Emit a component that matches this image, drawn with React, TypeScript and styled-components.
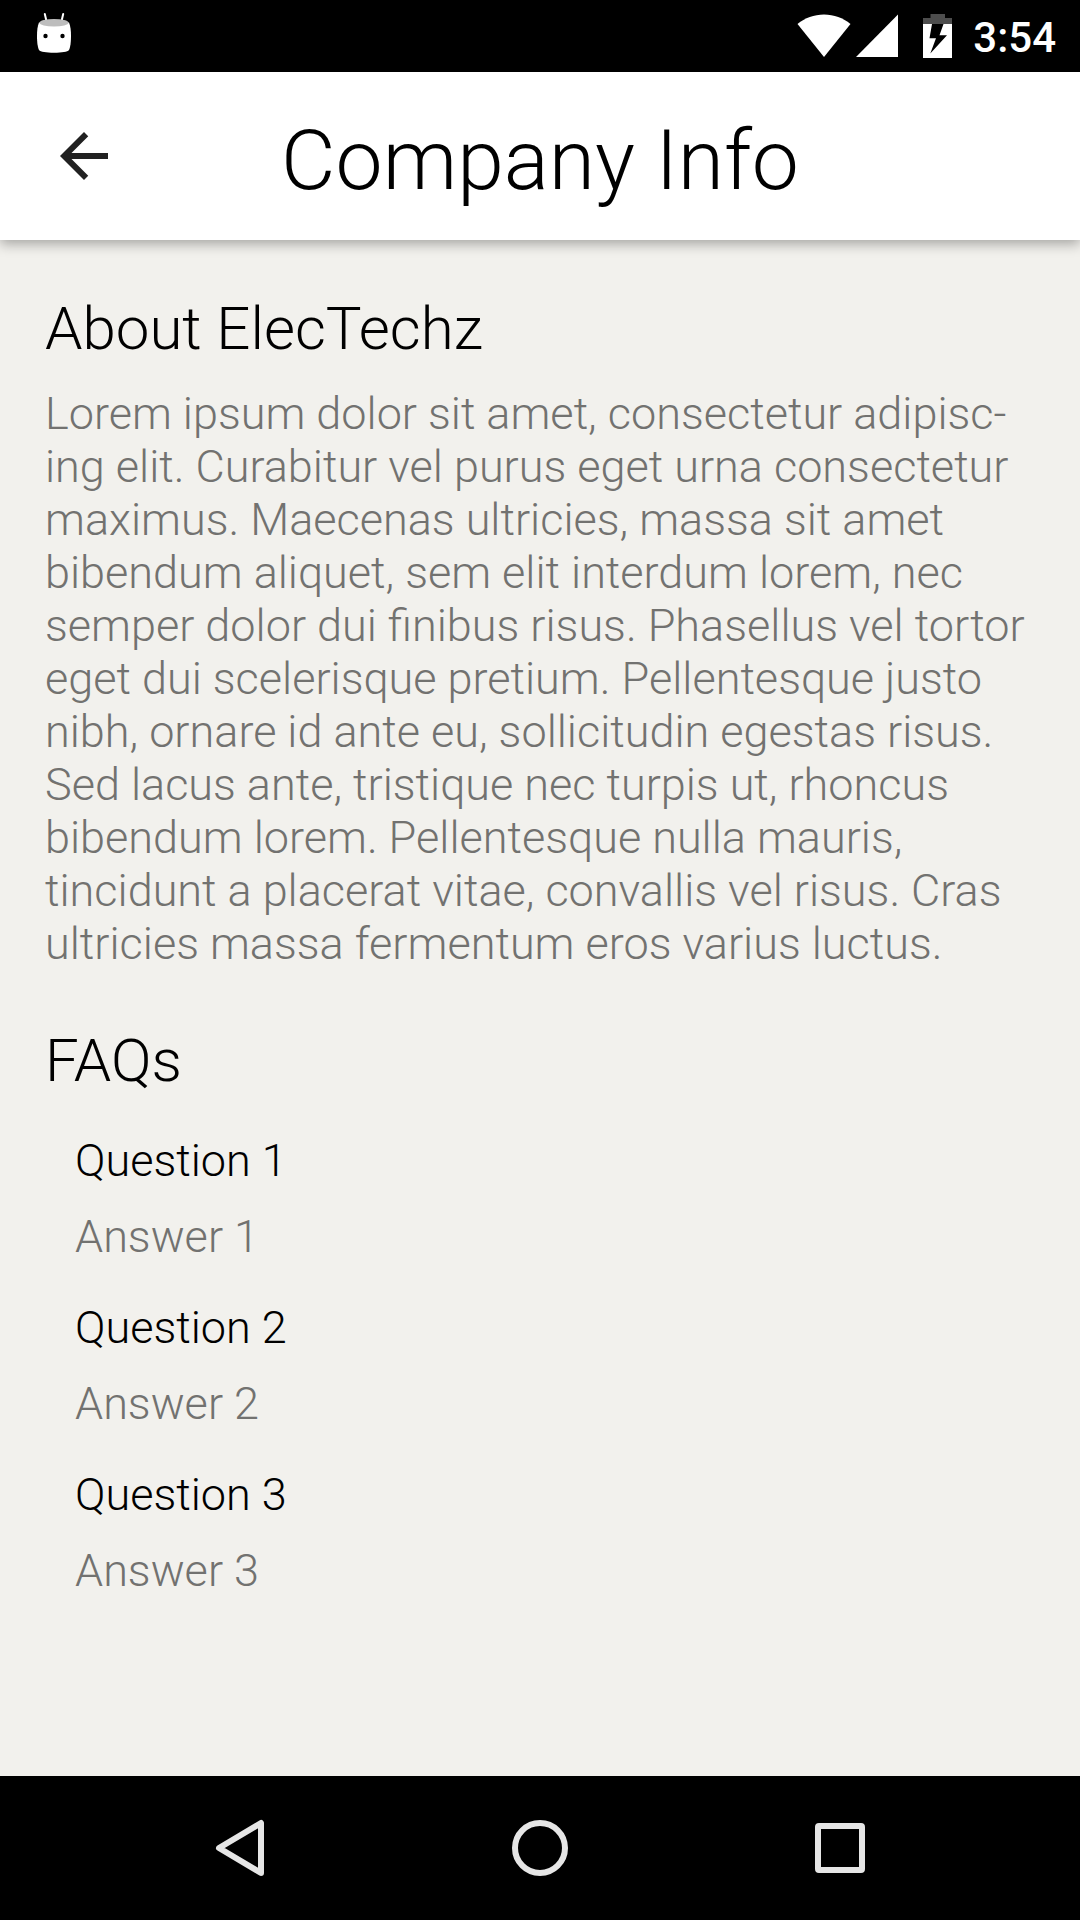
import React from "react";
import styled, { createGlobalStyle } from "styled-components";

const Global = createGlobalStyle`
  * { box-sizing: border-box; }
  body { margin: 0; background: #f2f1ed; font-family: Roboto, sans-serif; font-weight: 300; }
  h1, h2, p, dl, dt, dd { margin: 0; font-weight: 300; }
`;
const Screen = styled.div`
  min-height: 100vh;
  display: flex;
  flex-direction: column;
  background: #f2f1ed;
  color: #000;
`;
const StatusBar = styled.div`
  height: 72px;
  background: #000;
  color: #fff;
  display: flex;
  align-items: center;
  justify-content: space-between;
  padding: 0 24px 0 36px;
`;
const StatusIcons = styled.div`
  display: flex;
  align-items: center;
`;
const StatusIcon = styled.svg<{ $gap?: number }>`
  display: block;
  margin-left: ${(p) => p.$gap ?? 0}px;
`;
const Clock = styled.time`
  font-size: 42px;
  line-height: 48px;
  font-weight: 500;
  margin-left: 21px;
  padding-top: 4px;
`;
const AppBar = styled.header`
  height: 168px;
  background: #fff;
  display: grid;
  grid-template-columns: 168px 1fr 168px;
  align-items: center;
  box-shadow: 0 4px 12px rgba(0, 0, 0, 0.32);
`;
const IconButton = styled.button`
  border: 0;
  padding: 0;
  background: none;
  display: flex;
  align-items: center;
  justify-content: center;
`;
const Title = styled.h1`
  padding-top: 9px;
  font-size: 84px;
  line-height: 96px;
  text-align: center;
`;
const Content = styled.main`
  flex: 1;
  padding: 53px 45px;
`;
const SectionTitle = styled.h2`
  font-size: 60px;
  line-height: 72px;
`;
const Body = styled.p`
  margin: 22px 0 55px;
  font-size: 45px;
  line-height: 53px;
  color: #727270;
`;
const Faqs = styled.dl`
  padding: 37px 30px 0;
`;
const Question = styled.dt`
  font-size: 45px;
  line-height: 53px;
`;
const Answer = styled.dd`
  margin: 23px 0 38px;
  font-size: 45px;
  line-height: 53px;
  color: #727270;
`;
const NavBar = styled.nav`
  height: 144px;
  background: #000;
  display: flex;
  justify-content: center;
  align-items: stretch;
`;
const NavButton = styled(IconButton)`
  width: 300px;
`;
const NavIcon = styled.svg`
  width: 60px;
  height: 60px;
  fill: none;
  stroke: #e6e6e6;
  stroke-width: 6px;
  stroke-linejoin: round;
`;

const faqs = [
  { question: "Question 1", answer: "Answer 1" },
  { question: "Question 2", answer: "Answer 2" },
  { question: "Question 3", answer: "Answer 3" },
];

export default function App() {
  return (
    <Screen>
      <Global />
      <StatusBar>
        <StatusIcon width="36" height="48" viewBox="0 0 36 48" aria-hidden="true">
          <path d="M8.800 2L10.800 10.500M27.200 2L25.200 10.500" stroke="#fff" strokeWidth="2" strokeLinecap="round" />
          <path d="M3 10.500H33C34.600 14 35 19 35 24C35 31 34.200 35.500 33 38C31.500 40 26 40.700 18 40.700S4.500 40 3 38C1.800 35.500 1 31 1 24C1 19 1.400 14 3 10.500Z" fill="#fff" />
          <ellipse cx="18" cy="10.700" rx="14.500" ry="3.800" fill="#bdbdbd" />
          <circle cx="9.500" cy="24" r="2.200" fill="#000" />
          <circle cx="26.500" cy="24" r="2.200" fill="#000" />
        </StatusIcon>
        <StatusIcons>
          <StatusIcon width="54" height="44" viewBox="0 0 54 44" aria-hidden="true">
            <path d="M0.500 10C8 4 17 0.500 27 0.500S46 4 53.500 10L27 43Z" fill="#fff" />
          </StatusIcon>
          <StatusIcon $gap={5} width="42" height="44" viewBox="0 0 42 44" aria-hidden="true">
            <path d="M0 43L42 0.500V43Z" fill="#fff" />
          </StatusIcon>
          <StatusIcon $gap={25} width="29" height="44" viewBox="0 0 29 44" aria-hidden="true">
            <path d="M0 10V4H7.500V0H22V4H29V10Z" fill="#4d4d4d" />
            <path d="M0 10H29V44H0Z" fill="#fff" />
            <path d="M9 10H20.500L16.500 21.300H24L7.300 39.500L13 24.300H6.500Z" fill="#000" />
          </StatusIcon>
          <Clock>3:54</Clock>
        </StatusIcons>
      </StatusBar>
      <AppBar>
        <IconButton aria-label="Back">
          <svg width="72" height="72" viewBox="0 0 24 24" fill="#212121">
            <path d="M20 11H7.830l5.590-5.590L12 4l-8 8 8 8 1.410-1.410L7.830 13H20z" />
          </svg>
        </IconButton>
        <Title>Company Info</Title>
      </AppBar>
      <Content>
        <SectionTitle>About ElecTechz</SectionTitle>
        <Body>
          Lorem ipsum dolor sit amet, consectetur adipisc-<br />ing elit. Curabitur vel purus eget urna consectetur
          maximus. Maecenas ultricies, massa sit amet bibendum aliquet, sem elit interdum lorem, nec semper dolor dui
          finibus risus. Phasellus vel tortor eget dui scelerisque pretium. Pellentesque justo nibh, ornare id ante eu,
          sollicitudin egestas risus. Sed lacus ante, tristique nec turpis ut, rhoncus bibendum lorem. Pellentesque
          nulla mauris, tincidunt a placerat vitae, convallis vel risus. Cras ultricies massa fermentum eros varius
          luctus.
        </Body>
        <SectionTitle>FAQs</SectionTitle>
        <Faqs>
          {faqs.map((faq) => (
            <React.Fragment key={faq.question}>
              <Question>{faq.question}</Question>
              <Answer>{faq.answer}</Answer>
            </React.Fragment>
          ))}
        </Faqs>
      </Content>
      <NavBar>
        <NavButton aria-label="Back">
          <NavIcon viewBox="0 0 60 60">
            <path d="M51 5V55L9 30Z" />
          </NavIcon>
        </NavButton>
        <NavButton aria-label="Home">
          <NavIcon viewBox="0 0 60 60">
            <circle cx="30" cy="30" r="25" />
          </NavIcon>
        </NavButton>
        <NavButton aria-label="Recent apps">
          <NavIcon viewBox="0 0 60 60">
            <rect x="8" y="8" width="44" height="44" rx="1" />
          </NavIcon>
        </NavButton>
      </NavBar>
    </Screen>
  );
}
